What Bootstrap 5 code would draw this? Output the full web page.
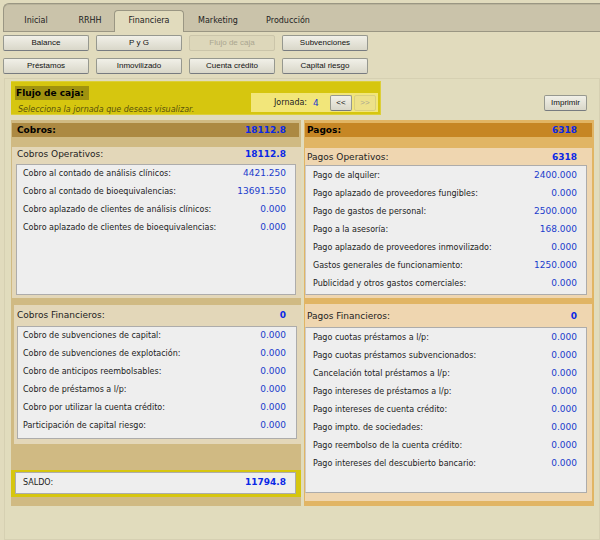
<!DOCTYPE html>
<html lang="es">
<head>
<meta charset="utf-8">
<meta name="viewport" content="width=device-width, initial-scale=1">
<title>Flujo de caja</title>
<link href="https://cdn.jsdelivr.net/npm/bootstrap@5.3.0/dist/css/bootstrap.min.css" rel="stylesheet">
<style>
body { background: #e1dbbd; font-family: "DejaVu Sans", Verdana, sans-serif; font-size: 8px; line-height: 12px; color: #222; }
a { color: inherit; text-decoration: none; }
.page-area { padding: 3px 0 0 3px; }
.tab-strip { background: #cac3aa; border: 1px solid #9a9683; border-right: 0; border-radius: 6px 0 0 0; padding: 6px 0 0 2px; height: 29px; box-shadow: inset 0 1px #b9b39b; }
.tab-strip .nav-link { color: #222; font-size: 8px; padding: 4px 0 0; margin-right: 1px; height: 22px; text-align: center; border: 1px solid transparent; border-bottom: 0; border-radius: 4px 4px 0 0; }
.tab-strip .nav-link.active { background: #e1dbbd; border-color: #9a9683; color: #222; }
.w-tab-a { width: 60px; } .w-tab-b { width: 46px; } .w-tab-c { width: 70px; } .w-tab-d { width: 66px; } .w-tab-e { width: 72px; }
.btn.key { --bs-btn-font-size: 8px; font-family: "Liberation Sans", Arial, sans-serif; line-height: 12px; padding: 1px 0; color: #111; border: 1px solid #96988f; border-bottom-color: #777b80; border-radius: 2px; background: linear-gradient(#f1f0e8, #d9d7c9); }
.btn.key:disabled { color: #aaa690; border-color: #cbc5aa; background: #ddd7ba; opacity: 1; }
.menu-keys { display: grid; grid-template-columns: repeat(4, 86px); gap: 7px; padding: 3px 0 4px; }
.menu-keys .key { line-height: 14px; padding: 0; }
.sheet { border: 1px solid #d6d0b2; margin-left: 1px; padding: 2px 5px 33px 6px; background: #e1dcbd; }
.pick-bar { background: #d6c60f; width: 370px; height: 34px; padding: 4px 2px 2px 4px; border: 1px solid #dccf39; border-width: 1px 1px 1px 0; }
.pick-title { background: #a0920f; color: #000; font-size: 9px; font-weight: 700; line-height: 14px; width: 74px; padding-left: 1px; margin: 0; }
.pick-hint { color: #59520c; font-style: italic; margin: 4px 0 0 3px; }
.pick-box { background: #f2e67a; gap: 2px; padding: 2px 2px 1px 23px; width: 127px; height: 19px; }
.key.step { width: 22px; height: 16px; }
.pick-box .key:disabled { background: #ede18a; border-color: #d9cf80; }
.key.print { width: 43px; height: 16px; margin-right: 7px; }
.flow-cols { display: grid; grid-template-columns: 1fr 1fr; gap: 3px; margin-top: 5px; }
.num { color: #1a3ccc; font-size: 9px; text-align: right; }
.sum { color: #0a28e6; font-weight: 700; font-size: 9px; }
.flow-in { background: #d0ba83; padding: 3px 0 9px 1px; }
.flow-out { background: #e1b564; padding: 3px 2px 4px 1px; }
.col-head { font-size: 9px; font-weight: 700; line-height: 14px; margin: 0; color: #000; }
.flow-in .col-head { background: #ac8942; padding: 0 13px 0 5px; margin-right: 2px; }
.flow-out .col-head { background: #c68624; padding: 0 15px 0 2px; }
.flow-in section { background: #e3d7b9; padding: 0 5px 3px 4px; }
.flow-out section { background: #efd6b0; padding: 0 5px 3px 0; }
.flow-in .first-part { margin-top: 10px; }
.flow-out .first-part { margin-top: 11px; }
.flow-in .second-part { margin: 7px 0 0 2px; padding: 0 4px 5px 3px; }
.flow-out .second-part { margin-top: 6px; padding-bottom: 8px; }
.part-head { font-size: 9px; font-weight: 400; line-height: 13px; margin: 0; color: #222; }
.flow-in .part-head { padding: 1px 10px 3px 1px; }
.flow-out .part-head { padding: 3px 10px 1px 2px; }
.flow-in .second-part .part-head { padding: 4px 11px 4px 0; }
.flow-out .second-part .part-head { padding: 6px 10px 4px 2px; }
.ledger { background: #eee; border: 1px solid #adacab; }
.flow-in .ledger { min-height: 131px; }
.flow-in .second-part .ledger { min-height: 113px; }
.flow-out .ledger { min-height: 130px; padding-top: 1px; border-left-color: #d0cbc4; }
.flow-out .second-part .ledger { min-height: 166px; }
.ledger table { width: 100%; }
.ledger th { font-weight: 400; height: 18px; padding: 0 0 0 6px; color: #222; }
.flow-in .second-part th { padding-left: 5px; }
.flow-out .ledger th { padding-left: 7px; }
.ledger td { padding: 0 9px 2px 0; }
.flow-in .second-part td { padding-right: 10px; }
.balance { background: #d6c60f; margin: 26px 0 0 -1px; padding: 2px 5px 3px 4px; }
.balance .ledger { min-height: 0; padding: 3px 9px 4px 7px; }
.balance .ledger span:first-child { padding-top: 1px; }
</style>
<script src="https://cdn.jsdelivr.net/npm/bootstrap@5.3.0/dist/js/bootstrap.bundle.min.js"></script>
</head>
<body>
<div class="page-area">
  <nav class="nav tab-strip flex-nowrap" aria-label="Secciones">
    <a class="nav-link w-tab-a" href="#">Inicial</a>
    <a class="nav-link w-tab-b" href="#">RRHH</a>
    <a class="nav-link w-tab-c active" aria-current="page" href="#">Financiera</a>
    <a class="nav-link w-tab-d" href="#">Marketing</a>
    <a class="nav-link w-tab-e" href="#">Producción</a>
  </nav>
  <div class="menu-keys">
    <button type="button" class="btn key">Balance</button>
    <button type="button" class="btn key">P y G</button>
    <button type="button" class="btn key" disabled>Flujo de caja</button>
    <button type="button" class="btn key">Subvenciones</button>
    <button type="button" class="btn key">Préstamos</button>
    <button type="button" class="btn key">Inmovilizado</button>
    <button type="button" class="btn key">Cuenta crédito</button>
    <button type="button" class="btn key">Capital riesgo</button>
  </div>
  <main class="sheet">
    <div class="d-flex justify-content-between align-items-end">
      <div class="pick-bar d-flex justify-content-between">
        <div>
          <h1 class="pick-title">Flujo de caja:</h1>
          <p class="pick-hint">Selecciona la jornada que deseas visualizar.</p>
        </div>
        <div class="pick-box d-flex align-items-center align-self-end">
          <span>Jornada:</span>
          <span class="num ms-1 me-auto">4</span>
          <button type="button" class="btn key step">&lt;&lt;</button>
          <button type="button" class="btn key step" disabled>&gt;&gt;</button>
        </div>
      </div>
      <button type="button" class="btn key print mb-1">Imprimir</button>
    </div>
    <div class="flow-cols">
      <div class="flow-in">
        <h2 class="col-head d-flex justify-content-between"><span>Cobros:</span><span class="sum">18112.8</span></h2>
        <section class="first-part">
          <h3 class="part-head d-flex justify-content-between"><span>Cobros Operativos:</span><span class="sum">18112.8</span></h3>
          <div class="ledger">
            <table>
              <tr><th scope="row">Cobro al contado de análisis clínicos:</th><td class="num">4421.250</td></tr>
              <tr><th scope="row">Cobro al contado de bioequivalencias:</th><td class="num">13691.550</td></tr>
              <tr><th scope="row">Cobro aplazado de clientes de análisis clínicos:</th><td class="num">0.000</td></tr>
              <tr><th scope="row">Cobro aplazado de clientes de bioequivalencias:</th><td class="num">0.000</td></tr>
            </table>
          </div>
        </section>
        <section class="second-part">
          <h3 class="part-head d-flex justify-content-between"><span>Cobros Financieros:</span><span class="sum">0</span></h3>
          <div class="ledger">
            <table>
              <tr><th scope="row">Cobro de subvenciones de capital:</th><td class="num">0.000</td></tr>
              <tr><th scope="row">Cobro de subvenciones de explotación:</th><td class="num">0.000</td></tr>
              <tr><th scope="row">Cobro de anticipos reembolsables:</th><td class="num">0.000</td></tr>
              <tr><th scope="row">Cobro de préstamos a l/p:</th><td class="num">0.000</td></tr>
              <tr><th scope="row">Cobro por utilizar la cuenta crédito:</th><td class="num">0.000</td></tr>
              <tr><th scope="row">Participación de capital riesgo:</th><td class="num">0.000</td></tr>
            </table>
          </div>
        </section>
        <div class="balance">
          <div class="ledger d-flex justify-content-between"><span>SALDO:</span><span class="sum">11794.8</span></div>
        </div>
      </div>
      <div class="flow-out">
        <h2 class="col-head d-flex justify-content-between"><span>Pagos:</span><span class="sum">6318</span></h2>
        <section class="first-part">
          <h3 class="part-head d-flex justify-content-between"><span>Pagos Operativos:</span><span class="sum">6318</span></h3>
          <div class="ledger">
            <table>
              <tr><th scope="row">Pago de alquiler:</th><td class="num">2400.000</td></tr>
              <tr><th scope="row">Pago aplazado de proveedores fungibles:</th><td class="num">0.000</td></tr>
              <tr><th scope="row">Pago de gastos de personal:</th><td class="num">2500.000</td></tr>
              <tr><th scope="row">Pago a la asesoría:</th><td class="num">168.000</td></tr>
              <tr><th scope="row">Pago aplazado de proveedores inmovilizado:</th><td class="num">0.000</td></tr>
              <tr><th scope="row">Gastos generales de funcionamiento:</th><td class="num">1250.000</td></tr>
              <tr><th scope="row">Publicidad y otros gastos comerciales:</th><td class="num">0.000</td></tr>
            </table>
          </div>
        </section>
        <section class="second-part">
          <h3 class="part-head d-flex justify-content-between"><span>Pagos Financieros:</span><span class="sum">0</span></h3>
          <div class="ledger">
            <table>
              <tr><th scope="row">Pago cuotas préstamos a l/p:</th><td class="num">0.000</td></tr>
              <tr><th scope="row">Pago cuotas préstamos subvencionados:</th><td class="num">0.000</td></tr>
              <tr><th scope="row">Cancelación total préstamos a l/p:</th><td class="num">0.000</td></tr>
              <tr><th scope="row">Pago intereses de préstamos a l/p:</th><td class="num">0.000</td></tr>
              <tr><th scope="row">Pago intereses de cuenta crédito:</th><td class="num">0.000</td></tr>
              <tr><th scope="row">Pago impto. de sociedades:</th><td class="num">0.000</td></tr>
              <tr><th scope="row">Pago reembolso de la cuenta crédito:</th><td class="num">0.000</td></tr>
              <tr><th scope="row">Pago intereses del descubierto bancario:</th><td class="num">0.000</td></tr>
            </table>
          </div>
        </section>
      </div>
    </div>
  </main>
</div>
</body>
</html>
